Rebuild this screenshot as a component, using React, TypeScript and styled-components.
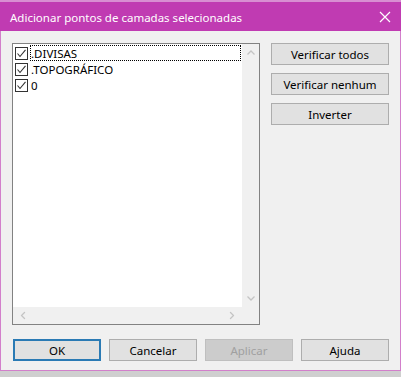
import React from "react";
import styled, { createGlobalStyle } from "styled-components";

const Global = createGlobalStyle`
  html, body { margin: 0; padding: 0; background: #cfcfcf; }
  body { font-family: "Noto Sans", "Liberation Sans", sans-serif; font-size: 11.5px; }
  * { box-sizing: border-box; }
`;

const Window = styled.div`
  width: 401px;
  height: 371px;
  display: flex;
  flex-direction: column;
  background: #f0f0f0;
  border-left: 1px solid #d27fcb;
  border-right: 1px solid #d27fcb;
  border-bottom: 1px solid #d27fcb;
`;

const TitleBar = styled.div`
  height: 31px;
  flex: none;
  margin: 0 -1px;
  border-top: 2px solid #d88ed2;
  background: #c03bb2;
  display: flex;
  align-items: center;
  justify-content: space-between;
  padding: 1px 10px 0 10px;
  color: #ffffff;
`;

const Title = styled.span`
  font-size: 11.5px;
`;

const Body = styled.div`
  flex: 1;
  display: flex;
  flex-direction: column;
  padding: 12px 11px 0 11px;
`;

const TopRow = styled.div`
  display: flex;
  gap: 11px;
`;

const ListBox = styled.div`
  width: 248px;
  height: 282px;
  border: 1px solid #828282;
  background: #ffffff;
  display: grid;
  grid-template-columns: 1fr 17px;
  grid-template-rows: 1fr 17px;
`;

const Items = styled.div`
  padding: 1px 0 0 2px;
  display: flex;
  flex-direction: column;
`;

const Item = styled.div`
  height: 16px;
  display: flex;
  align-items: center;
  gap: 2px;
  color: #000;
`;

const Label = styled.span<{ $focus?: boolean }>`
  flex: 1;
  height: 16px;
  line-height: 15px;
  font-size: 11.5px;
  border: 1px dotted ${(p) => (p.$focus ? "#000" : "transparent")};
  margin-right: 1px;
`;

const Box = styled.span`
  width: 13px;
  height: 13px;
  border: 1px solid #333;
  background: #fff;
  display: flex;
  align-items: center;
  justify-content: center;
`;

const VScroll = styled.div`
  background: #f0f0f0;
  display: flex;
  flex-direction: column;
  justify-content: space-between;
  align-items: center;
  padding: 6px 0;
`;

const HScroll = styled.div`
  background: #f0f0f0;
  display: flex;
  justify-content: space-between;
  align-items: center;
  padding: 0 6px;
`;

const Corner = styled.div`
  background: #f0f0f0;
`;

const SideCol = styled.div`
  width: 118px;
  display: flex;
  flex-direction: column;
  gap: 8px;
`;

const Button = styled.button<{ $default?: boolean }>`
  height: 22px;
  font-family: inherit;
  font-size: 11.5px;
  color: ${(p) => (p.disabled ? "#a0a0a0" : "#000")};
  background: ${(p) => (p.disabled ? "#cccccc" : "#e1e1e1")};
  border: ${(p) => (p.$default ? "2px solid #2a7ab4" : p.disabled ? "1px solid #bfbfbf" : "1px solid #adadad")};
  padding: 0;
  display: flex;
  align-items: center;
  justify-content: center;
`;

const BottomRow = styled.div`
  margin-top: 14px;
  padding-left: 1px;
  display: grid;
  grid-template-columns: repeat(4, 88px);
  gap: 8px;
`;

const Chevron = ({ dir }: { dir: "up" | "down" | "left" | "right" }) => {
  const rot = { up: 0, down: 180, left: 270, right: 90 }[dir];
  return (
    <svg width="8" height="5" viewBox="0 0 8 5" style={{ transform: `rotate(${rot}deg)` }}>
      <path d="M0.5 4.5 L4 1 L7.5 4.5" fill="none" stroke="#c4c4c4" strokeWidth="1.3" />
    </svg>
  );
};

const Check = () => (
  <svg width="11" height="11" viewBox="0 0 11 11">
    <path d="M1.5 5.5 L4 8.5 L9.5 1.8" fill="none" stroke="#333" strokeWidth="1.1" />
  </svg>
);

const items = [".DIVISAS", ".TOPOGRÁFICO", "0"];

export default function App() {
  return (
    <>
      <Global />
      <Window>
        <TitleBar>
          <Title>Adicionar pontos de camadas selecionadas</Title>
          <svg width="12" height="12" viewBox="0 0 12 12">
            <path d="M1 1 L11 11 M11 1 L1 11" stroke="#fff" strokeWidth="1.2" />
          </svg>
        </TitleBar>
        <Body>
          <TopRow>
            <ListBox>
              <Items>
                {items.map((t, i) => (
                  <Item key={t}>
                    <Box>
                      <Check />
                    </Box>
                    <Label $focus={i === 0}>{t}</Label>
                  </Item>
                ))}
              </Items>
              <VScroll>
                <Chevron dir="up" />
                <Chevron dir="down" />
              </VScroll>
              <HScroll>
                <Chevron dir="left" />
                <Chevron dir="right" />
              </HScroll>
              <Corner />
            </ListBox>
            <SideCol>
              <Button>Verificar todos</Button>
              <Button>Verificar nenhum</Button>
              <Button>Inverter</Button>
            </SideCol>
          </TopRow>
          <BottomRow>
            <Button $default>OK</Button>
            <Button>Cancelar</Button>
            <Button disabled>Aplicar</Button>
            <Button>Ajuda</Button>
          </BottomRow>
        </Body>
      </Window>
    </>
  );
}
